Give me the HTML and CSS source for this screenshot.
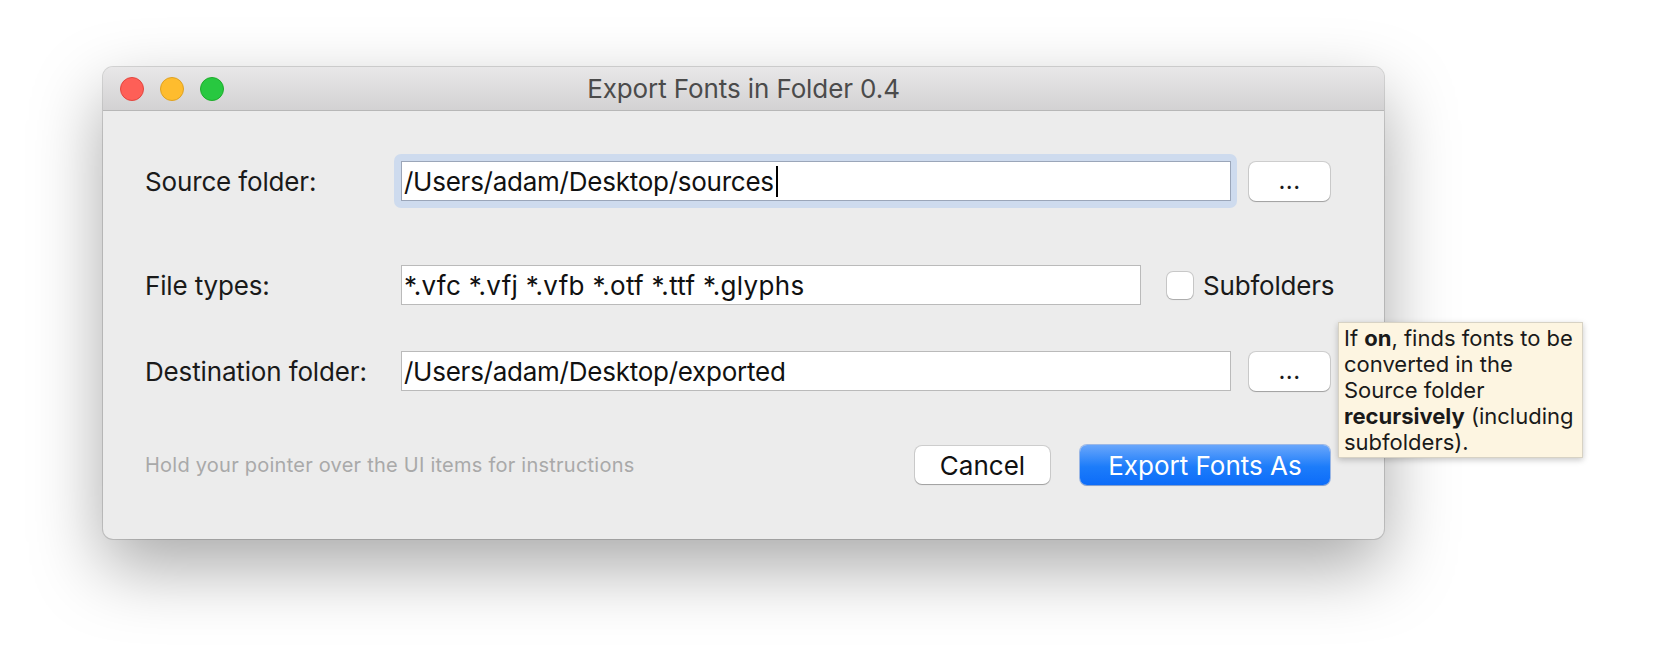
FILE: index.html
```html
<!DOCTYPE html>
<html>
<head>
<meta charset="utf-8">
<title>Export Fonts in Folder 0.4</title>
<link rel="stylesheet" href="styles.css">
</head>
<body>
<div class="window">
  <div class="titlebar">
    <div class="lights">
      <span class="light red"></span>
      <span class="light yellow"></span>
      <span class="light green"></span>
    </div>
    <div class="title">Export Fonts in Folder 0.4</div>
    <div></div>
  </div>
  <div class="content">
    <div class="row row-source">
      <div class="label">Source folder:</div>
      <div class="focus-ring">
        <div class="field field-wide focused">/Users/adam/Desktop/sources<span class="caret"></span></div>
      </div>
      <div class="btn btn-browse">...</div>
    </div>
    <div class="row row-types">
      <div class="label">File types:</div>
      <div class="field field-types">*.vfc *.vfj *.vfb *.otf *.ttf *.glyphs</div>
      <div class="checkbox"></div>
      <div class="check-label">Subfolders</div>
    </div>
    <div class="row row-dest">
      <div class="label">Destination folder:</div>
      <div class="field field-wide">/Users/adam/Desktop/exported</div>
      <div class="btn btn-browse">...</div>
    </div>
    <div class="row row-actions">
      <div class="hint">Hold your pointer over the UI items for instructions</div>
      <div class="btn btn-cancel">Cancel</div>
      <div class="btn btn-primary">Export Fonts As</div>
    </div>
  </div>
</div>
<div class="tooltip">If <b>on</b>, finds fonts to be converted in the Source folder <b>recursively</b> (including subfolders).</div>
</body>
</html>
```

FILE: styles.css
```css
html, body {
  margin: 0;
  padding: 0;
  background: #ffffff;
}

body {
  width: 1654px;
  height: 658px;
  overflow: hidden;
  position: relative;
  padding: 67px 0 0 103px;
  box-sizing: border-box;
  font-family: "Inter", "Noto Sans", "Liberation Sans", sans-serif;
  color: #1a1a1a;
}

.window {
  width: 1281px;
  height: 472px;
  border-radius: 10px;
  background: #ececec;
  box-shadow: 0 28px 70px rgba(0, 0, 0, 0.34), 0 0 0 1px rgba(0, 0, 0, 0.14);
  overflow: hidden;
  display: flex;
  flex-direction: column;
}

.titlebar {
  height: 43px;
  flex: none;
  border-bottom: 1px solid #b7b7b7;
  background: linear-gradient(#e8e7e8, #d3d2d3);
  display: grid;
  grid-template-columns: 1fr auto 1fr;
  align-items: center;
}

.lights {
  display: flex;
  gap: 16px;
  padding-left: 17px;
}

.light {
  width: 24px;
  height: 24px;
  border-radius: 50%;
  box-sizing: border-box;
}
.red { background: #fe5f57; border: 1px solid #e2463f; }
.yellow { background: #febc2e; border: 1px solid #dea123; }
.green { background: #28c840; border: 1px solid #1eac2b; }

.title {
  font-size: 26px;
  color: #4b4b4b;
  letter-spacing: -0.1px;
}

.content {
  flex: 1;
  padding: 50px 54px 0 42px;
  display: flex;
  flex-direction: column;
}

.row {
  display: flex;
  align-items: center;
  height: 40px;
}
.row-types { margin-top: 64px; }
.row-dest { margin-top: 46px; }
.row-actions { margin-top: 54px; }

.label {
  width: 256px;
  flex: none;
  font-size: 26px;
  letter-spacing: -0.15px;
}

.focus-ring {
  flex: none;
  margin: -7px -6px -7px -7px;
  padding: 7px 6px 7px 7px;
  border-radius: 7px;
  background: #cedbee;
  display: flex;
}

.field {
  flex: none;
  box-sizing: border-box;
  height: 40px;
  background: #ffffff;
  border: 1px solid #bababa;
  font-size: 26px;
  padding: 0 2px;
  display: flex;
  align-items: center;
  white-space: nowrap;
  letter-spacing: -0.25px;
  color: #111;
}
.field.focused { border-color: #9ba6b9; }
.field-wide { width: 830px; }
.field-types { width: 740px; letter-spacing: 0.3px; }

.caret {
  display: inline-block;
  width: 2px;
  height: 31px;
  background: #000;
  margin-left: 2px;
}

.btn {
  flex: none;
  box-sizing: border-box;
  display: flex;
  align-items: center;
  justify-content: center;
  font-size: 26px;
  border-radius: 7px;
  background: #ffffff;
  box-shadow: 0 0 0 1px rgba(0, 0, 0, 0.13), 0 1px 1px rgba(0, 0, 0, 0.22);
}

.btn-browse {
  width: 81px;
  height: 39px;
  margin-left: 18px;
  padding-bottom: 1px;
  letter-spacing: 0.5px;
  font-size: 24px;
}

.checkbox {
  flex: none;
  width: 26px;
  height: 27px;
  box-sizing: border-box;
  margin-left: 26px;
  border-radius: 6px;
  background: #ffffff;
  box-shadow: 0 0 0 1px rgba(0, 0, 0, 0.15), 0 1px 1px rgba(0, 0, 0, 0.15);
}

.check-label {
  flex: none;
  margin-left: 10px;
  font-size: 26px;
  letter-spacing: -0.2px;
  white-space: nowrap;
}

.hint {
  flex: 1;
  font-size: 20px;
  color: #a9a9a9;
  letter-spacing: 0.24px;
  white-space: nowrap;
}

.btn-cancel {
  width: 135px;
  height: 38px;
  color: #111;
}

.btn-primary {
  width: 250px;
  height: 40px;
  margin-left: 30px;
  color: #ffffff;
  background: linear-gradient(#69a6fb, #1c7cfa 55%, #0c6cf9);
  box-shadow: 0 0 0 1px rgba(10, 90, 220, 0.35), 0 1px 1px rgba(0, 0, 0, 0.18);
}

.tooltip {
  position: absolute;
  left: 1338px;
  top: 322px;
  width: 245px;
  height: 136px;
  box-sizing: border-box;
  padding: 2px 4px 0 5px;
  background: #fdf5e1;
  border: 1px solid #d7d2c4;
  box-shadow: 0 2px 6px rgba(0, 0, 0, 0.22);
  font-size: 22px;
  line-height: 26px;
  color: #1a1a1a;
}
.tooltip b { font-weight: 700; }
```
